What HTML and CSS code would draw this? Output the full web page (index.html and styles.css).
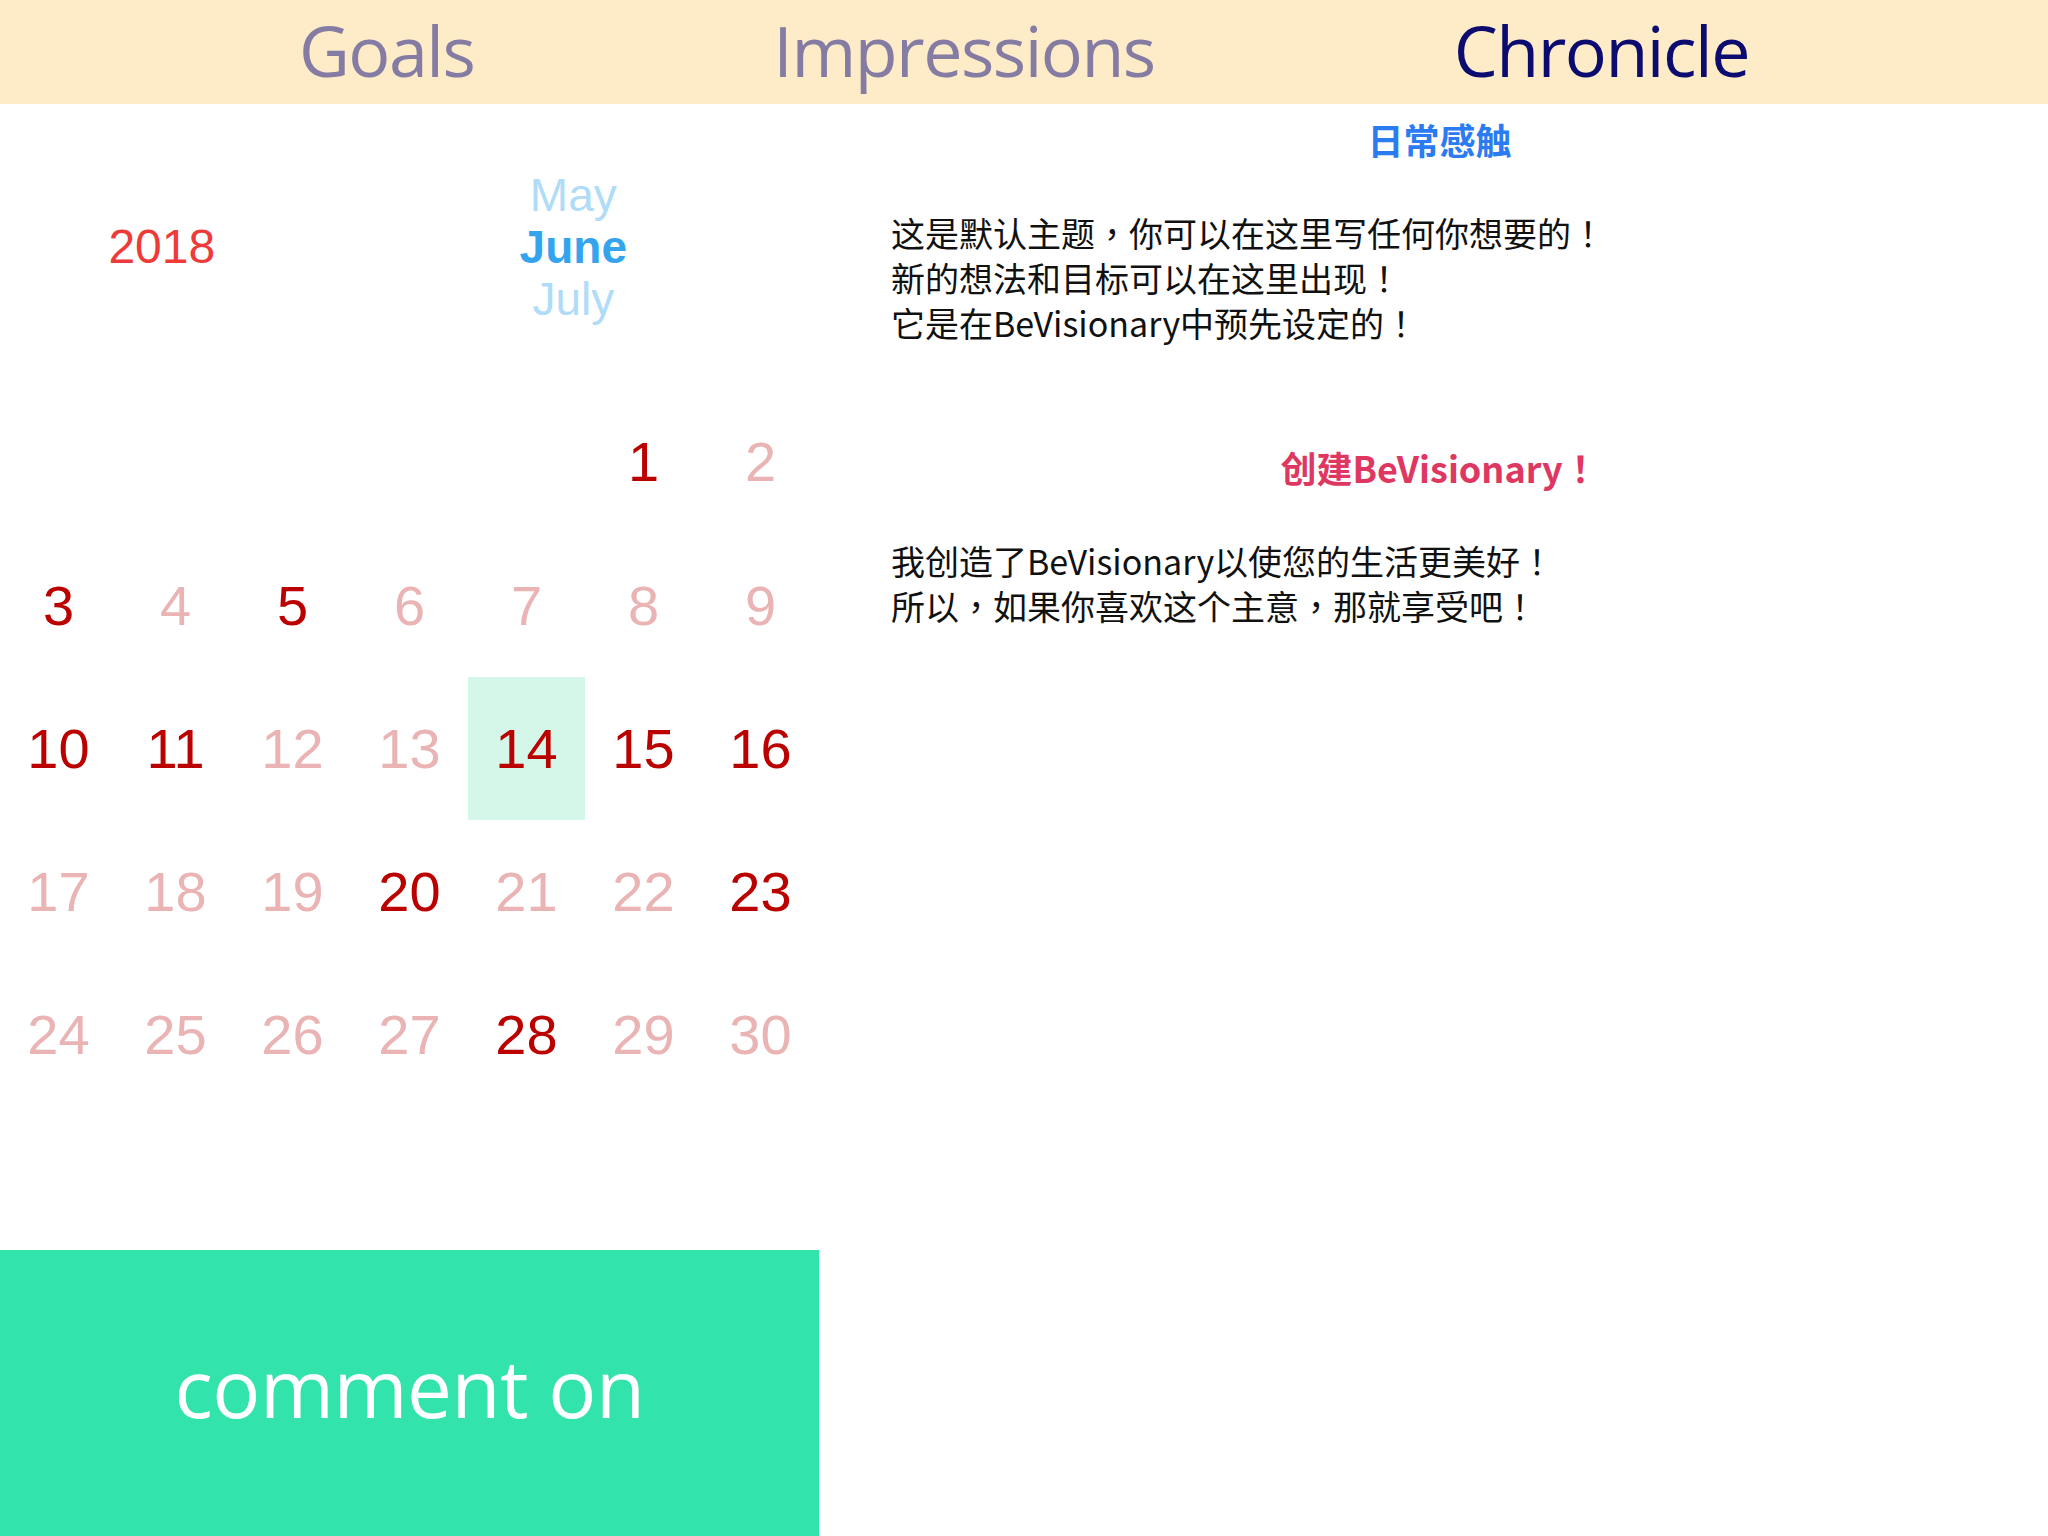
FILE: index.html
```html
<!DOCTYPE html>
<html lang="zh-CN">
<head>
<meta charset="utf-8">
<title>Chronicle</title>
<link rel="stylesheet" href="styles.css">
</head>
<body>
<header class="tabs">
  <span class="tab">Goals</span>
  <span class="tab">Impressions</span>
  <span class="tab tab-active">Chronicle</span>
</header>
<main class="main">
  <section class="left">
    <div class="period">
      <div class="year">2018</div>
      <div class="months">
        <div class="month">May</div>
        <div class="month month-current">June</div>
        <div class="month">July</div>
      </div>
    </div>
    <div class="calendar">
      <div class="day"></div>
      <div class="day"></div>
      <div class="day"></div>
      <div class="day"></div>
      <div class="day"></div>
      <div class="day day-on">1</div>
      <div class="day">2</div>
      <div class="day day-on">3</div>
      <div class="day">4</div>
      <div class="day day-on">5</div>
      <div class="day">6</div>
      <div class="day">7</div>
      <div class="day">8</div>
      <div class="day">9</div>
      <div class="day day-on">10</div>
      <div class="day day-on">11</div>
      <div class="day">12</div>
      <div class="day">13</div>
      <div class="day day-on day-today">14</div>
      <div class="day day-on">15</div>
      <div class="day day-on">16</div>
      <div class="day">17</div>
      <div class="day">18</div>
      <div class="day">19</div>
      <div class="day day-on">20</div>
      <div class="day">21</div>
      <div class="day">22</div>
      <div class="day day-on">23</div>
      <div class="day">24</div>
      <div class="day">25</div>
      <div class="day">26</div>
      <div class="day">27</div>
      <div class="day day-on">28</div>
      <div class="day">29</div>
      <div class="day">30</div>
    </div>
    <button class="comment">comment on</button>
  </section>
  <section class="right">
    <h2 class="entry-title">日常感触</h2>
    <p class="entry-text">这是默认主题<span class="punct" lang="zh-TW">，</span>你可以在这里写任何你想要的<span class="punct" lang="zh-TW">！</span><br>新的想法和目标可以在这里出现<span class="punct" lang="zh-TW">！</span><br>它是在BeVisionary中预先设定的<span class="punct" lang="zh-TW">！</span></p>
    <h3 class="entry-heading">创建BeVisionary<span class="punct" lang="zh-TW">！</span></h3>
    <p class="entry-text">我创造了BeVisionary以使您的生活更美好<span class="punct" lang="zh-TW">！</span><br>所以<span class="punct" lang="zh-TW">，</span>如果你喜欢这个主意<span class="punct" lang="zh-TW">，</span>那就享受吧<span class="punct" lang="zh-TW">！</span></p>
  </section>
</main>
</body>
</html>
```

FILE: styles.css
```css
html, body {
  margin: 0;
  padding: 0;
  background: #ffffff;
}

body {
  width: 2048px;
  height: 1536px;
  overflow: hidden;
  font-family: "Liberation Sans", Arial, sans-serif;
}

.tabs {
  height: 104px;
  background: #feebc7;
  display: flex;
  justify-content: space-evenly;
  align-items: center;
}

.tab {
  font-family: "Open Sans", sans-serif;
  font-size: 70px;
  letter-spacing: -1.5px;
  line-height: 1;
  color: #847ca2;
  padding-bottom: 4px;
}

.tab-active {
  color: #0b0b70;
}

.main {
  display: flex;
  height: 1432px;
}

.left {
  width: 819px;
  flex: none;
  display: grid;
  grid-template-rows: 2fr 6fr 2fr;
}

.period {
  display: grid;
  grid-template-columns: 2fr 3fr;
  align-items: center;
}

.year {
  text-align: center;
  font-size: 48px;
  color: #ef3a3a;
  line-height: 1;
  padding-right: 4px;
}

.months {
  text-align: center;
  font-size: 46px;
  line-height: 52px;
}

.month {
  color: #b0dcf8;
}

.month-current {
  color: #35a4ee;
  font-weight: bold;
}

.calendar {
  display: grid;
  grid-template-columns: repeat(7, 1fr);
  grid-template-rows: repeat(6, 1fr);
}

.day {
  display: flex;
  align-items: center;
  justify-content: center;
  font-size: 56px;
  color: #eab4b4;
}

.day-on {
  color: #bb0000;
}

.day-today {
  background: #d4f7ea;
}

.comment {
  border: none;
  margin: 0;
  padding: 0 0 12px;
  background: #33e3ac;
  color: #ffffff;
  font-family: "Open Sans", sans-serif;
  font-size: 80px;
  letter-spacing: -0.5px;
  cursor: pointer;
}

.right {
  flex: 1;
  padding: 13px 60px 0 72px;
  font-family: "Noto Sans CJK SC", sans-serif;
  color: #111111;
  text-spacing-trim: space-all;
}

.punct {
  font-family: "Noto Sans CJK TC", "Noto Sans CJK SC", sans-serif;
  font-feature-settings: "locl" 0;
}

.entry-title {
  margin: 0;
  text-align: center;
  font-size: 36px;
  line-height: 45px;
  font-weight: bold;
  color: #2b7cf3;
}

.entry-heading {
  margin: 100px 0 0;
  text-align: center;
  font-size: 36px;
  line-height: 45px;
  font-weight: bold;
  color: #de3862;
}

.entry-text {
  margin: 48px 0 0;
  font-size: 34px;
  line-height: 45px;
}
```
